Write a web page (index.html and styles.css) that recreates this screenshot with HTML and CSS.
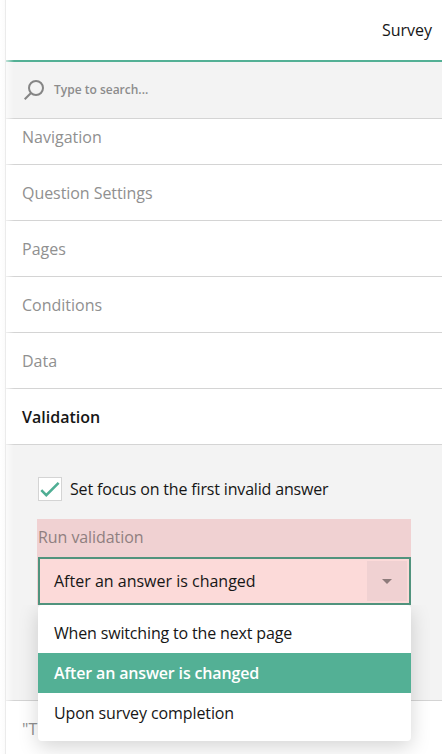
FILE: index.html
```html
<!DOCTYPE html>
<html lang="en">
<head>
<meta charset="utf-8">
<title>Survey settings</title>
<link rel="stylesheet" href="styles.css">
</head>
<body>
<aside class="panel">
  <header class="panel-header"><span>Survey</span></header>
  <div class="search">
    <svg class="search-icon" width="20" height="20" viewBox="0 0 20 20" fill="none" stroke="#858585" stroke-width="2"><circle cx="12" cy="8" r="7"/><path d="M7 13L.7 19.3"/></svg>
    <span class="search-text">Type to search...</span>
  </div>
  <nav class="sections">
    <div class="section section-first">Navigation</div>
    <div class="section section-question">Question Settings</div>
    <div class="section">Pages</div>
    <div class="section">Conditions</div>
    <div class="section">Data</div>
    <div class="section section-active">Validation</div>
  </nav>
  <div class="content">
    <label class="check">
      <span class="check-box"><svg width="22" height="22" viewBox="0 0 22 22" fill="none" stroke="#4fae94" stroke-width="2.6"><path d="M2.3 12.2L7.3 17.2L19.6 4.9"/></svg></span>
      <span class="check-label">Set focus on the first invalid answer</span>
    </label>
    <div class="field">
      <div class="field-label">Run validation</div>
      <div class="select">
        <span class="select-value">After an answer is changed</span>
        <span class="select-button"><svg width="10" height="5" viewBox="0 0 10 5"><path d="M0 0H10L5 5Z" fill="#8d7b7b"/></svg></span>
        <div class="popup">
          <div class="option">When switching to the next page</div>
          <div class="option option-selected">After an answer is changed</div>
          <div class="option option-completion">Upon survey completion</div>
        </div>
      </div>
    </div>
  </div>
  <div class="section section-last">"T</div>
</aside>
</body>
</html>
```
FILE: styles.css
```css
* { box-sizing: border-box; }
body {
  margin: 0;
  height: 754px;
  overflow: hidden;
  padding-left: 5px;
  background: linear-gradient(90deg, #fff 0, #fbfbfb 5px, #fff 5px);
  font: 16px/24px "Open Sans", sans-serif;
  color: #161616;
}
.panel {
  position: relative;
  height: 754px;
  border-left: 1px solid #ebebeb;
  background: #fff;
}
.panel::after {
  content: "";
  position: absolute;
  top: 0;
  left: 0;
  width: 8px;
  height: 100%;
  background: linear-gradient(90deg, rgba(255, 255, 255, .65), rgba(255, 255, 255, 0));
}
.panel-header {
  display: flex;
  align-items: center;
  justify-content: flex-end;
  height: 62px;
  padding-right: 10px;
  border-bottom: 2px solid #53b095;
}
.search {
  display: flex;
  align-items: center;
  height: 57px;
  padding-left: 18px;
  background: #f3f3f3;
  border-bottom: 1px solid #d4d4d4;
}
.search-icon { margin-right: 10px; }
.search-text { font-size: 12px; font-weight: 600; color: #8c8c8c; }
.section {
  height: 56px;
  padding: 16px 16px 15px;
  border-bottom: 1px solid #d4d4d4;
  color: #909090;
}
.section-first { height: 46px; padding-top: 6px; }
.section-question { letter-spacing: -.06px; }
.section-active { color: #161616; font-weight: 600; }
.section-last { border: 0; }
.content {
  height: 256px;
  padding: 32px 31px 0;
  background: #f3f3f3;
  border-bottom: 1px solid #d4d4d4;
}
.check { display: flex; align-items: center; height: 24px; padding-left: 1px; }
.check-box {
  width: 24px;
  height: 24px;
  margin-right: 8px;
  border: 1px solid #d4d4d4;
  background: #fff;
}
.check-box svg { display: block; }
.check-label { letter-spacing: -.165px; }
.field { margin-top: 18px; padding-left: 1px; background: #f0d1d2; }
.field-label { height: 38px; padding-top: 6px; color: #8f7f80; letter-spacing: -.07px; }
.select {
  position: relative;
  display: flex;
  align-items: center;
  justify-content: space-between;
  height: 48px;
  padding: 0 2px 0 14px;
  border: 2px solid #50937d;
  background: #fcdad9;
}
.select-button {
  display: flex;
  align-items: center;
  justify-content: center;
  width: 40px;
  height: 40px;
  background: #f0d1d2;
}
.popup {
  position: absolute;
  z-index: 2;
  top: 46px;
  left: -2px;
  right: -2px;
  padding: 8px 0;
  border-radius: 4px;
  background: #fff;
  box-shadow: 0 6px 20px rgba(0, 0, 0, .17);
  clip-path: inset(0 -40px -40px -40px);
}
.option { height: 40px; padding: 8px 16px; letter-spacing: -.16px; }
.option-selected { background: #53b095; color: #fff; font-weight: 600; }
.option-completion { letter-spacing: -.1px; }
```
